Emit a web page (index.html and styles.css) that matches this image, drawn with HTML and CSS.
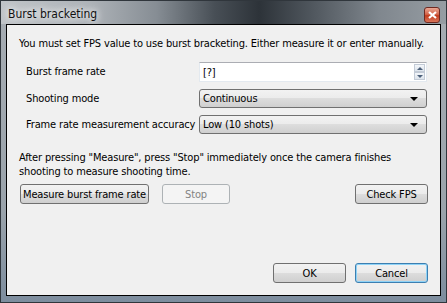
FILE: index.html
```html
<!DOCTYPE html>
<html lang="en">
<head>
  <meta charset="UTF-8">
  <title>Burst bracketing</title>
  <link rel="stylesheet" href="styles.css">
</head>
<body>
  <div class="window">
    <div class="titlebar">
      <span class="title">Burst bracketing</span>
      <span class="close">
        <svg width="9" height="8" viewBox="0 0 9 8"><path d="M1 1 L8 7 M8 1 L1 7" stroke="#fff" stroke-width="2.2"/></svg>
      </span>
    </div>
    <div class="client">
      <p class="intro">You must set FPS value to use burst bracketing. Either measure it or enter manually.</p>

      <div class="form">
        <label>Burst frame rate</label>
        <div class="spin">
          <span class="spin-value">[?]</span>
          <span class="spin-btns">
            <span class="spin-btn"><i class="up"></i></span>
            <span class="spin-btn"><i class="down"></i></span>
          </span>
        </div>

        <label>Shooting mode</label>
        <div class="combo">Continuous<i class="arrow"></i></div>

        <label>Frame rate measurement accuracy</label>
        <div class="combo">Low (10 shots)<i class="arrow"></i></div>
      </div>

      <p class="hint">After pressing "Measure", press "Stop" immediately once the camera finishes shooting to measure shooting time.</p>

      <div class="measure-row">
        <button class="btn btn-measure">Measure burst frame rate</button>
        <button class="btn btn-stop" disabled>Stop</button>
        <button class="btn btn-check">Check FPS</button>
      </div>

      <div class="footer">
        <button class="btn btn-ok">OK</button>
        <button class="btn btn-cancel">Cancel</button>
      </div>
    </div>
  </div>
</body>
</html>
```

FILE: styles.css
```css
body {
  margin: 0;
  background: #fff;
  font-family: "DejaVu Sans Condensed", "DejaVu Sans", sans-serif;
  font-stretch: condensed;
  font-size: 11px;
  letter-spacing: -0.15px;
  color: #000;
}
.window {
  width: 447px;
  height: 303px;
  box-sizing: border-box;
  border: 1px solid #30363c;
  padding: 0 5px 6px 5px;
  background: linear-gradient(to bottom, #a7adb3 0%, #9aa3ab 70%, #7d8d9e 100%);
  display: flex;
  flex-direction: column;
}
.titlebar {
  height: 23px;
  margin: 0 -5px;
  padding: 0 6px 0 7px;
  display: flex;
  align-items: center;
  justify-content: space-between;
  background: linear-gradient(to right, #c0c4c8 0%, #aeb3b8 20%, #868d94 35%, #484f56 48%, #2d3339 58%, #50575e 70%, #80878e 85%, #969da3 100%);
}
.title {
  font-size: 12px;
  letter-spacing: 0;
  color: #111;
  padding: 2px 30px 0 0;
  text-shadow: 0 0 6px #fff, 0 0 10px #fff;
}
.close {
  width: 16px;
  height: 16px;
  box-sizing: border-box;
  margin-top: 4px;
  border: 1px solid #6e2a22;
  border-radius: 3px;
  background: linear-gradient(to bottom, #e9a794 0%, #d4664c 45%, #c33b1c 55%, #d8755a 100%);
  display: flex;
  align-items: center;
  justify-content: center;
}
.client {
  flex: 1;
  background: #f0f0f0;
  border: 1px solid #000;
  padding: 0 12px 0 12px;
  display: flex;
  flex-direction: column;
}
.intro {
  margin: 12px 0 0 0;
  line-height: 14px;
  white-space: nowrap;
}
.form {
  display: grid;
  grid-template-columns: 173px 228px;
  row-gap: 7px;
  align-items: center;
  margin: 11px 0 0 7px;
}
.form label {
  line-height: 14px;
  white-space: nowrap;
}
.spin {
  height: 20px;
  box-sizing: border-box;
  background: #fff;
  border: 1px solid #e3e9ef;
  border-top-color: #abadb3;
  display: flex;
  align-items: center;
  justify-content: space-between;
  padding: 0 1px 0 3px;
}
.spin-btns {
  display: flex;
  flex-direction: column;
}
.spin-btn {
  width: 11px;
  height: 8px;
  box-sizing: border-box;
  border: 1px solid #c3cbd6;
  background: linear-gradient(to bottom, #f3f6fa, #dde4ec);
  display: flex;
  align-items: center;
  justify-content: center;
}
.up, .down {
  width: 0;
  height: 0;
  border-left: 3px solid transparent;
  border-right: 3px solid transparent;
}
.up { border-bottom: 3px solid #4c607a; }
.down { border-top: 3px solid #4c607a; }
.combo {
  height: 19px;
  box-sizing: border-box;
  border: 1px solid #707070;
  border-radius: 3px;
  background: linear-gradient(to bottom, #f2f2f2 0%, #ebebeb 50%, #dddddd 50%, #cfcfcf 100%);
  padding: 0 0 0 3px;
  display: flex;
  align-items: center;
  justify-content: space-between;
}
.arrow {
  width: 0;
  height: 0;
  margin-right: 8px;
  border-left: 4px solid transparent;
  border-right: 4px solid transparent;
  border-top: 4px solid #000;
}
.hint {
  margin: 17px 0 0 0;
  line-height: 14px;
  width: 395px;
}
.btn {
  font-family: inherit;
  font-stretch: condensed;
  font-size: 11px;
  letter-spacing: -0.15px;
  height: 20px;
  padding: 0;
  box-sizing: border-box;
  border: 1px solid #707070;
  border-radius: 3px;
  background: linear-gradient(to bottom, #f2f2f2 0%, #ebebeb 50%, #dddddd 50%, #cfcfcf 100%);
  color: #000;
}
.measure-row {
  display: flex;
  margin: 5px 0 0 1px;
}
.btn-measure { width: 129px; }
.btn-stop {
  width: 68px;
  margin-left: 13px;
  border-color: #adb2b5;
  background: #f4f4f4;
  color: #838383;
}
.btn-check {
  width: 73px;
  margin-left: auto;
}
.footer {
  margin-top: auto;
  margin-bottom: 12px;
  display: flex;
  justify-content: flex-end;
  gap: 9px;
}
.btn-ok { width: 73px; }
.btn-cancel {
  width: 73px;
  border-color: #3c7fb1;
  box-shadow: inset 0 0 0 1px #8fd3f7;
}
```
